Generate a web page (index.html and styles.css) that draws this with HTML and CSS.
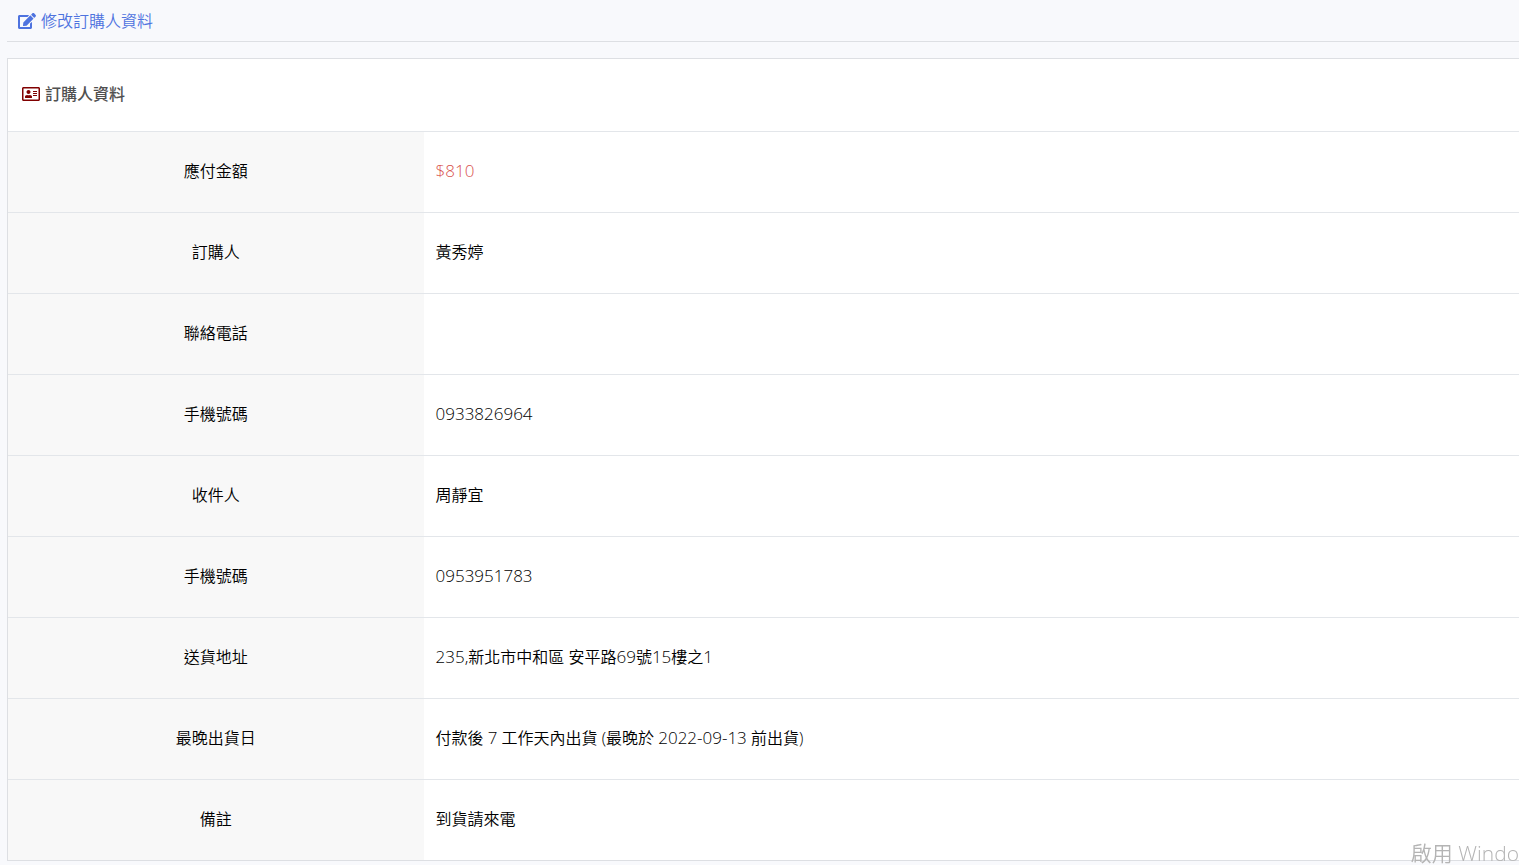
FILE: index.html
```html
<!doctype html>
<html lang="zh-Hant">
  <head>
    <meta charset="UTF-8" />
    <meta name="viewport" content="width=device-width, initial-scale=1.0" />
    <title>訂購人資料</title>
    <link rel="stylesheet" href="styles.css">
  </head>
  <body>
    <div class="wrapper">
      <div class="toolbar">
        <a href="#edit" class="edit-link">
          <svg class="icon" viewBox="0 0 576 512" fill="currentColor" aria-hidden="true">
            <path d="M402.600 83.200l90.200 90.200c3.800 3.800 3.800 10 0 13.800L274.400 405.600l-92.800 10.300c-12.400 1.400-22.900-9.100-21.500-21.500l10.300-92.800L388.800 83.200c3.800-3.800 10-3.800 13.800 0zm162-22.900l-48.800-48.800c-15.200-15.200-39.900-15.200-55.200 0l-35.400 35.400c-3.800 3.800-3.800 10 0 13.800l90.200 90.200c3.800 3.800 10 3.800 13.800 0l35.400-35.400c15.200-15.300 15.200-40 0-55.200zM384 346.200V448H64V128h229.800c3.200 0 6.200-1.300 8.500-3.500l40-40c7.600-7.600 2.200-20.500-8.500-20.500H48C21.500 64 0 85.500 0 112v352c0 26.500 21.500 48 48 48h352c26.500 0 48-21.500 48-48V306.200c0-10.700-12.900-16-20.500-8.500l-40 40c-2.200 2.300-3.500 5.300-3.500 8.500z" />
          </svg>
          <span>修改訂購人資料</span>
        </a>
      </div>

      <section class="card">
        <h1 class="card-title">
          <svg class="icon icon-card" viewBox="0 0 576 512" fill="currentColor" aria-hidden="true">
            <path d="M528 32H48C21.500 32 0 53.500 0 80v352c0 26.500 21.500 48 48 48h480c26.500 0 48-21.500 48-48V80c0-26.500-21.500-48-48-48zm0 400H48V80h480v352zM208 256c35.300 0 64-28.700 64-64s-28.700-64-64-64-64 28.700-64 64 28.700 64 64 64zm-89.600 128h179.200c12.400 0 22.400-8.600 22.400-19.200v-19.200c0-31.800-30.100-57.600-67.200-57.600-10.800 0-18.700 8-44.800 8-26.900 0-33.400-8-44.800-8-37.100 0-67.200 25.800-67.200 57.600v19.200c0 10.600 10 19.200 22.400 19.200zM360 320h112c4.400 0 8-3.600 8-8v-16c0-4.400-3.600-8-8-8H360c-4.400 0-8 3.600-8 8v16c0 4.400 3.600 8 8 8zm0-64h112c4.400 0 8-3.600 8-8v-16c0-4.400-3.600-8-8-8H360c-4.400 0-8 3.600-8 8v16c0 4.400 3.600 8 8 8zm0-64h112c4.400 0 8-3.600 8-8v-16c0-4.400-3.600-8-8-8H360c-4.400 0-8 3.600-8 8v16c0 4.400 3.600 8 8 8z" />
          </svg>
          <span>訂購人資料</span>
        </h1>
        <table class="info">
          <tbody>
            <tr>
              <th scope="row">應付金額</th>
              <td class="price"><span class="num">$810</span></td>
            </tr>
            <tr>
              <th scope="row">訂購人</th>
              <td>黃秀婷</td>
            </tr>
            <tr>
              <th scope="row">聯絡電話</th>
              <td></td>
            </tr>
            <tr>
              <th scope="row">手機號碼</th>
              <td><span class="num">0933826964</span></td>
            </tr>
            <tr>
              <th scope="row">收件人</th>
              <td>周靜宜</td>
            </tr>
            <tr>
              <th scope="row">手機號碼</th>
              <td><span class="num">0953951783</span></td>
            </tr>
            <tr>
              <th scope="row">送貨地址</th>
              <td><span class="num">235,</span>新北市中和區 安平路<span class="num">69</span>號<span class="num">15</span>樓之<span class="num">1</span></td>
            </tr>
            <tr>
              <th scope="row">最晚出貨日</th>
              <td>付款後 <span class="num">7</span> 工作天內出貨 (最晚於 <span class="num">2022-09-13</span> 前出貨)</td>
            </tr>
            <tr>
              <th scope="row">備註</th>
              <td>到貨請來電</td>
            </tr>
          </tbody>
        </table>
      </section>
    </div>

    <div class="watermark">啟用 Windo</div>
  </body>
</html>
```

FILE: styles.css
```css
* {
  box-sizing: border-box;
}

body {
  margin: 0;
  background: #f8f9fc;
  color: #000;
  font: 350 16px/24px "Open Sans", "Noto Sans CJK TC", sans-serif;
}

.wrapper {
  padding: 0 0 4px 7px;
}

.toolbar {
  padding: 9px 11px 8px;
  border-bottom: 1px solid #dddfe3;
}

.edit-link {
  display: inline-flex;
  align-items: center;
  gap: 5px;
  color: #4e73df;
  text-decoration: none;
  vertical-align: top;
}

.icon {
  width: 18px;
  height: 16px;
}

.icon-card {
  color: #800000;
}

.card {
  margin-top: 16px;
  background: #fff;
  border: 1px solid #dddfe3;
  border-right: 0;
}

.card-title {
  display: flex;
  align-items: center;
  gap: 5px;
  margin: 0;
  padding: 23px 14px 25px;
  color: #505050;
  font-size: 16px;
  font-weight: 500;
}

.info {
  width: 100%;
  border-collapse: separate;
  border-spacing: 0;
  table-layout: fixed;
}

.info th,
.info td {
  height: 81px;
  padding: 27px 12px 29px;
  border-top: 1px solid #e3e6ea;
}

.info th {
  width: 27.5%;
  background: #f8f8f8;
  font-weight: 350;
  text-align: center;
}

.num {
  font-size: 17px;
}

.info .price {
  color: #d9534f;
}

.watermark {
  position: fixed;
  right: 0;
  bottom: 0;
  color: #b4b4b4;
  font-size: 21px;
  white-space: nowrap;
}
```
